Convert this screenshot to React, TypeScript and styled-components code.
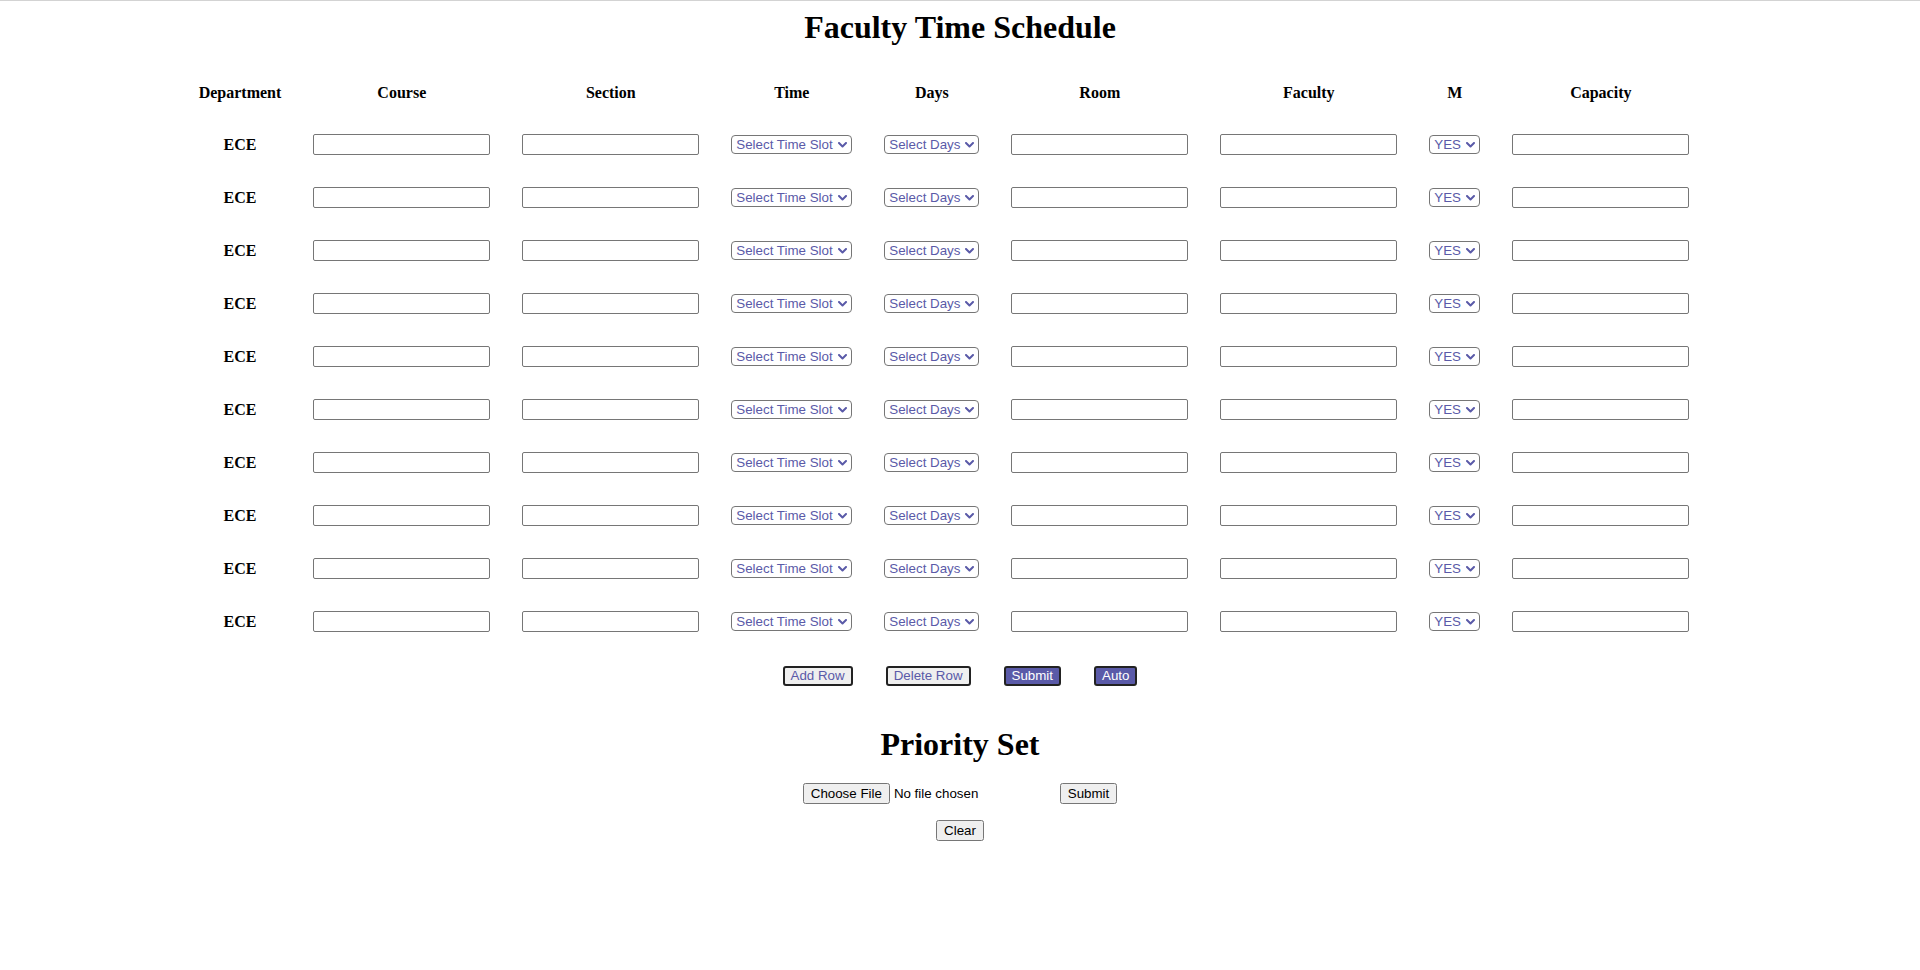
import React from "react";
import styled, { createGlobalStyle } from "styled-components";

const GlobalStyle = createGlobalStyle`
  html, body {
    margin: 0;
    padding: 0;
    background: #ffffff;
  }
  body {
    font-family: "Liberation Serif", "Times New Roman", serif;
    font-size: 16px;
    color: #000000;
  }
`;

const ACCENT = "#5a5aa8";
const CONTROL_FONT = `"Liberation Sans", Arial, sans-serif`;

const Page = styled.div`
  border-top: 1px solid #d3d3d3;
  min-height: 969px;
`;

const Title = styled.h1<{ $top: number; $bottom: number }>`
  margin: ${(p) => p.$top}px 0 ${(p) => p.$bottom}px;
  text-align: center;
  font-size: 32px;
  font-weight: bold;
  line-height: normal;
`;

const ScheduleTable = styled.table`
  margin: 0 auto;
  border-collapse: collapse;
  border-spacing: 0;
`;

const HeadCell = styled.th`
  padding: 16px;
  font-size: 16px;
  font-weight: bold;
  text-align: center;
  vertical-align: middle;
  white-space: nowrap;
`;

const Cell = styled.td<{ $bold?: boolean }>`
  padding: 16px;
  text-align: center;
  vertical-align: middle;
  font-weight: ${(p) => (p.$bold ? "bold" : "normal")};
`;

const TextInput = styled.input`
  display: block;
  box-sizing: border-box;
  width: 177px;
  height: 21px;
  margin: 0 auto;
  padding: 1px 2px;
  border: 1px solid #767676;
  border-radius: 2px;
  background: #ffffff;
  font-family: ${CONTROL_FONT};
  font-size: 13.333px;
`;

const PickerWrap = styled.div<{ $width: number }>`
  position: relative;
  width: ${(p) => p.$width}px;
  height: 19px;
  margin: 0 auto;
`;

const Picker = styled.select`
  appearance: none;
  -webkit-appearance: none;
  display: block;
  box-sizing: border-box;
  width: 100%;
  height: 100%;
  margin: 0;
  padding: 0 16px 0 4px;
  border: 1px solid #767676;
  border-radius: 4px;
  background: #ffffff;
  color: ${ACCENT};
  font-family: ${CONTROL_FONT};
  font-size: 13.333px;
  line-height: 17px;
  cursor: pointer;
`;

const Chevron = styled.svg`
  position: absolute;
  right: 5px;
  top: 7px;
  width: 9px;
  height: 6px;
  pointer-events: none;
`;

const ActionBar = styled.div`
  display: flex;
  justify-content: center;
  gap: 33px;
  margin-top: 18px;
`;

const ActionButton = styled.button<{ $primary?: boolean }>`
  box-sizing: border-box;
  height: 20px;
  padding: 0 6px;
  border: 2px solid #222222;
  border-radius: 3px;
  background: ${(p) => (p.$primary ? ACCENT : "#efefef")};
  color: ${(p) => (p.$primary ? "#ffffff" : ACCENT)};
  font-family: ${CONTROL_FONT};
  font-size: 13.333px;
  line-height: 16px;
  cursor: pointer;
`;

const UploadRow = styled.form`
  display: flex;
  justify-content: center;
  align-items: center;
  gap: 4px;
`;

const FileInput = styled.input`
  width: 253px;
  font-family: ${CONTROL_FONT};
  font-size: 13.333px;
  color: #000;
  &::file-selector-button {
    font-family: ${CONTROL_FONT};
    font-size: 13.333px;
  }
`;

const PlainButton = styled.button`
  font-family: ${CONTROL_FONT};
  font-size: 13.333px;
`;

const ClearRow = styled.div`
  display: flex;
  justify-content: center;
  margin-top: 16px;
`;

const columns = [
  "Department",
  "Course",
  "Section",
  "Time",
  "Days",
  "Room",
  "Faculty",
  "M",
  "Capacity",
];

const rows = Array.from({ length: 10 }, (_, i) => i);

type SelectProps = {
  width: number;
  defaultValue: string;
  options: { value: string; label: string }[];
};

function Select({ width, defaultValue, options }: SelectProps) {
  return (
    <PickerWrap $width={width}>
      <Picker defaultValue={defaultValue}>
        {options.map((o) => (
          <option key={o.value} value={o.value}>
            {o.label}
          </option>
        ))}
      </Picker>
      <Chevron viewBox="0 0 9 6" aria-hidden="true">
        <path
          d="M1 1 L4.5 4.5 L8 1"
          fill="none"
          stroke={ACCENT}
          strokeWidth="2"
          strokeLinecap="round"
          strokeLinejoin="round"
        />
      </Chevron>
    </PickerWrap>
  );
}

const timeOptions = [
  { value: "", label: "Select Time Slot" },
  { value: "1", label: "08:30 - 10:00" },
  { value: "2", label: "10:10 - 11:40" },
  { value: "3", label: "11:50 - 01:20" },
];

const dayOptions = [
  { value: "", label: "Select Days" },
  { value: "st", label: "ST" },
  { value: "mw", label: "MW" },
  { value: "ra", label: "RA" },
];

const mOptions = [
  { value: "yes", label: "YES" },
  { value: "no", label: "NO" },
];

export default function App() {
  return (
    <>
      <GlobalStyle />
      <Page>
        <Title $top={8} $bottom={22}>
          Faculty Time Schedule
        </Title>
        <ScheduleTable>
          <thead>
            <tr>
              {columns.map((c) => (
                <HeadCell key={c}>{c}</HeadCell>
              ))}
              <HeadCell />
            </tr>
          </thead>
          <tbody>
            {rows.map((r) => (
              <tr key={r}>
                <Cell $bold>ECE</Cell>
                <Cell>
                  <TextInput type="text" />
                </Cell>
                <Cell>
                  <TextInput type="text" />
                </Cell>
                <Cell>
                  <Select width={121} defaultValue="" options={timeOptions} />
                </Cell>
                <Cell>
                  <Select width={95} defaultValue="" options={dayOptions} />
                </Cell>
                <Cell>
                  <TextInput type="text" />
                </Cell>
                <Cell>
                  <TextInput type="text" />
                </Cell>
                <Cell>
                  <Select width={51} defaultValue="yes" options={mOptions} />
                </Cell>
                <Cell>
                  <TextInput type="text" />
                </Cell>
                <Cell />
              </tr>
            ))}
          </tbody>
        </ScheduleTable>
        <ActionBar>
          <ActionButton type="button">Add Row</ActionButton>
          <ActionButton type="button">Delete Row</ActionButton>
          <ActionButton type="button" $primary>
            Submit
          </ActionButton>
          <ActionButton type="button" $primary>
            Auto
          </ActionButton>
        </ActionBar>
        <Title $top={40} $bottom={20}>
          Priority Set
        </Title>
        <UploadRow onSubmit={(e) => e.preventDefault()}>
          <FileInput type="file" />
          <PlainButton type="submit">Submit</PlainButton>
        </UploadRow>
        <ClearRow>
          <PlainButton type="button">Clear</PlainButton>
        </ClearRow>
      </Page>
    </>
  );
}
